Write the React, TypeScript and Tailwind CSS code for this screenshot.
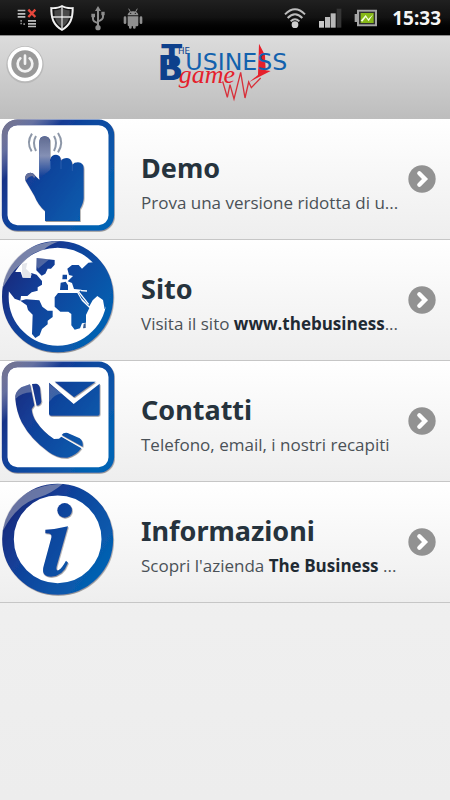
import type { ReactNode } from "react";

function StatusBar() {
  return (
    <div className="flex h-[35px] shrink-0 items-center justify-between bg-gradient-to-b from-[#202020] via-[#121212] to-black pr-[9px] pl-[16px]">
      <div className="flex items-center gap-[12px]">
        <svg className="h-[22px] w-[22px]" viewBox="0 0 66 66" aria-hidden="true">
          <g fill="#bdbdbd">
            <path d="M5 8h23v5H5zM5 18h23v5H5zM5 27h23v5H5zM36 39h24v5H36zM36 48h24v5H36zM36 56h24v5H36z" />
            <path d="M13 39h5v5h-5zM13 47h5v5h-5zM22 49h5v5h-5z" fill="#8a8a8a" />
          </g>
          <path d="M37 8l21 22M58 8L37 30" stroke="#e8473c" strokeWidth="7" />
        </svg>
        <svg className="h-[28px] w-[26px]" viewBox="3 0 78 84" aria-hidden="true">
          <path d="M39 3C29 9 16 11 4 9c-1 34 7 58 35 72C67 67 75 43 74 9 62 11 49 9 39 3z" fill="#f2f2f2" />
          <path d="M39 9C29 14 19 16 10 15c0 28 7 46 29 59 22-13 29-31 29-59-9 1-19-1-29-6z" fill="#151515" />
          <path d="M36 14c-7 3-14 5-20 5 0 6 0 12 1 17h19zM42 14c7 3 14 5 20 5 0 6 0 12-1 17H42zM36 42H18c3 11 9 19 18 25zM42 42h18c-3 11-9 19-18 25z" fill="#4a4a4a" />
          <path d="M39 8v66M8 39h62" stroke="#ededed" strokeWidth="4" />
        </svg>
        <svg className="ml-[2px] h-[26px] w-[16px]" viewBox="0 0 48 78" aria-hidden="true">
          <g fill="none" stroke="#8d8d8d" strokeWidth="6">
            <path d="M24 14v56M9 31v11q0 8 15 12M39 27v9q0 8-15 13" />
          </g>
          <g fill="#8d8d8d">
            <path d="M24 3l9 15H15zM4 26h11v11H4zM34 20h10v11H34z" />
            <circle cx="24" cy="68" r="8" />
          </g>
        </svg>
        <svg className="ml-[4px] h-[22px] w-[22px]" viewBox="0 0 66 66" aria-hidden="true">
          <g fill="#8f8f8f">
            <path d="M17 25C18 9 48 9 49 25zM17 28h32v26q0 4-4 4h-4v4q0 3-4 3t-4-3v-4h-4v4q0 3-4 3t-4-3v-4q-4 0-4-4z" />
            <rect x="5" y="28" width="8" height="23" rx="4" />
            <rect x="53" y="28" width="8" height="23" rx="4" />
          </g>
          <path d="M20 5l6 11M46 5l-6 11" stroke="#8f8f8f" strokeWidth="3" />
          <circle cx="26" cy="19" r="2" fill="#151515" />
          <circle cx="40" cy="19" r="2" fill="#151515" />
        </svg>
      </div>
      <div className="flex items-center gap-[12px]">
        <svg className="h-[22px] w-[22px]" viewBox="0 0 66 66" aria-hidden="true">
          <g fill="none" stroke="#bcbcbc" strokeWidth="6">
            <path d="M3 22q30-30 60 0M11 33q22-23 44 0M20 43q13-13 26 0" />
          </g>
          <circle cx="33" cy="53" r="10" fill="#cfcfcf" />
        </svg>
        <svg className="h-[20px] w-[24px]" viewBox="0 0 72 60" aria-hidden="true">
          <path d="M3 39h15v20H3z" fill="#c8c8c8" />
          <path d="M21 27h15v32H21z" fill="#bcbcbc" />
          <path d="M38 16h15v43H38z" fill="#b8b8b8" />
          <path d="M56 2h14v57H56z" fill="#363636" />
        </svg>
        <svg className="h-[18px] w-[24px]" viewBox="0 0 72 54" aria-hidden="true">
          <path d="M9 2h60v50H9V39H2V15h7z" fill="#a5a5a5" />
          <path d="M15 8h48v38H15z" fill="#303030" />
          <path d="M20 12h39v30H20z" fill="#86b817" />
          <path d="M20 35l15-17 8 12 15-15-14 22-9-12-10 13z" fill="#f4ffe1" />
        </svg>
        <time className="ml-[2px] text-[19px] leading-[24px] font-bold text-[#f5f5f5]">15:33</time>
      </div>
    </div>
  );
}

function Logo() {
  return (
    <svg className="h-[60px] w-[131px] overflow-visible" viewBox="30 15 393 180" role="img" aria-label="The Business Game">
      <path d="M327 17L345 52 347 97 362 99 298 132 324 111z" fill="#e5202b" />
      <g fill="#0d408c" fontFamily="'DejaVu Sans', sans-serif">
        <text x="34" y="84" fontSize="92" fontWeight="700">T</text>
        <text x="22" y="127" fontSize="103" fontWeight="700">B</text>
        <text x="84" y="47" fontSize="26">HE</text>
      </g>
      <text x="106" y="95" fontSize="71" fill="#1261ad" fontFamily="'DejaVu Sans', sans-serif">USINESS</text>
      <text x="86" y="136" fontSize="78" fill="#e5202b" fontStyle="italic" fontFamily="'Liberation Serif', serif">game</text>
      <path d="M218 130L232 178 240 140 252 183 272 103 285 180 296 132 304 149 332 120" fill="none" stroke="#d8303a" strokeWidth="4" />
    </svg>
  );
}

function Header() {
  return (
    <header className="grid h-[84px] shrink-0 grid-cols-[1fr_auto_1fr] items-start border-t border-[#8b8b8b] bg-gradient-to-b from-[#dcdcdc] to-[#bdbdbd] px-[5px] pt-[7px]">
      <button type="button" aria-label="Esci" className="h-[42px] w-[42px] cursor-pointer">
        <svg className="h-[42px] w-[42px]" viewBox="0 0 126 126" aria-hidden="true">
          <circle cx="60" cy="65" r="56" fill="#b9b9b9" />
          <circle cx="60" cy="63" r="52" fill="#fff" />
          <circle cx="60" cy="63" r="41" fill="#999" />
          <path d="M46 46a22 22 0 1 0 28 0M60 38v24" fill="none" stroke="#f3f3f3" strokeWidth="8" strokeLinecap="round" />
        </svg>
      </button>
      <Logo />
    </header>
  );
}

function IconDefs() {
  return (
    <svg className="absolute h-0 w-0" aria-hidden="true">
      <defs>
        <linearGradient id="blue" gradientUnits="userSpaceOnUse" x1="6" y1="30" x2="342" y2="260">
          <stop offset="0" stopColor="#1c2070" />
          <stop offset="0.4" stopColor="#123f98" />
          <stop offset="1" stopColor="#0364b4" />
        </linearGradient>
        <linearGradient id="gloss" gradientUnits="userSpaceOnUse" x1="14" y1="20" x2="100" y2="106">
          <stop offset="0" stopColor="#8f8f96" stopOpacity="0.75" />
          <stop offset="0.5" stopColor="#b4b4c0" stopOpacity="0.5" />
          <stop offset="1" stopColor="#d5d5dc" stopOpacity="0" />
        </linearGradient>
        <linearGradient id="finger" gradientUnits="userSpaceOnUse" x1="0" y1="60" x2="0" y2="185">
          <stop offset="0" stopColor="#5d688e" />
          <stop offset="0.5" stopColor="#8490b5" />
          <stop offset="1" stopColor="#123f98" />
        </linearGradient>
        <filter id="soft" x="-10%" y="-10%" width="120%" height="120%">
          <feDropShadow dx="2" dy="3" stdDeviation="2" floodColor="#555" floodOpacity="0.6" />
        </filter>
      </defs>
    </svg>
  );
}

function IconFrame({ children }: { children: ReactNode }) {
  return (
    <svg className="h-[115px] w-[115px] shrink-0" viewBox="0 12 345 345" aria-hidden="true">
      {children}
    </svg>
  );
}

function SquareBorder() {
  return (
    <>
      <rect x="14" y="22" width="320" height="317" rx="38" fill="#fff" stroke="url(#blue)" strokeWidth="17" filter="url(#soft)" />
      <rect x="14" y="22" width="320" height="317" rx="38" fill="none" stroke="url(#gloss)" strokeWidth="17" />
    </>
  );
}

function DemoIcon() {
  return (
    <IconFrame>
      <SquareBorder />
      <g filter="url(#soft)">
        <path
          d="M118 82Q118 64 134 64T150 82V134Q154 119 168 119 182 119 183 137 188 129 201 129 215 130 217 149 222 142 234 142 251 143 251 160V248Q251 263 240 282V318H135V288Q114 270 103 242L77 198Q72 182 84 175 97 169 106 183L118 194z"
          fill="url(#blue)"
        />
        <path d="M118 82Q118 64 134 64T150 82V165L118 190z" fill="url(#finger)" />
        <path d="M103 190L97 183Q84 185 77 198 72 182 84 175 97 169 106 183z" fill="#66709a" />
      </g>
      <path d="M151 138v24M183 138v24M217 149v19" stroke="#3b69b5" strokeWidth="2" />
      <g fill="none" stroke="#8d97a8" strokeWidth="6">
        <path d="M108 63q-12 20 0 45M96 56q-18 27-1 53M162 63q12 20 0 45M174 54q19 29 0 58" />
      </g>
    </IconFrame>
  );
}

function GlobeIcon() {
  return (
    <IconFrame>
      <circle cx="173" cy="182" r="157" fill="#fff" stroke="url(#blue)" strokeWidth="20" filter="url(#soft)" />
      <g fill="url(#blue)">
        <path d="M24 130L42 108H62L68 125 92 126 94 111 110 116 126 135V146L113 154V164L95 169 82 180H63L61 194 44 188 24 163z" />
        <path d="M110 66L164 72V86L153 98H143L136 113 125 119 109 103z" />
        <path d="M61 194L78 190 118 193 127 212 143 224H158V243L143 254V265L126 279 119 298 106 306 96 294 98 236 84 222 80 208z" />
        <path d="M202 98L216 87H236L246 98 265 80 294 77 333 132 329 188 314 220 309 192 292 180 278 193 268 211 244 186 235 169 245 161 222 159 216 141 203 136 219 120 207 117z" />
        <path d="M188 116h13v14h-14zM182 140L197 137 204 148V162H180z" />
        <path d="M174 171H232L246 195 268 216 258 237V260L246 262 240 277 224 281 214 268V234L205 227H181L164 212V184z" />
      </g>
      <path d="M235 166L266 205M243 164l18 1" stroke="#fff" strokeWidth="4" />
      <path d="M251 264l6-3v15l-8 1z" fill="#385d91" />
      <path d="M8 155C17 70 90 16 180 16Q150 24 130 42 95 48 72 78 40 100 24 130z" fill="#b9bac4" opacity="0.6" />
      <path d="M110 66l38 4-34 28q-7-10-4-32z" fill="#b9bac4" opacity="0.35" />
      <path d="M66 84l16-4-4 18 18 18-8 10-20-2-2-16z" fill="#d9dbe3" opacity="0.7" />
    </IconFrame>
  );
}

function ContactIcon() {
  return (
    <IconFrame>
      <SquareBorder />
      <g fill="url(#blue)" filter="url(#soft)">
        <path d="M46 126Q43 106 64 91L90 82 103 145 95 156Q96 176 109 194 130 225 162 246L177 245 184 239 244 274Q228 296 202 302 171 304 145 284 93 248 65 196 49 163 46 126z" />
        <path d="M96 81L109 80Q118 82 120 93L124 133Q123 145 110 146z" />
        <path d="M185 234Q190 226 203 228L239 244Q250 251 248 269z" />
        <path d="M147 77L221 141 299 80V170Q299 176 293 176H153Q147 176 147 170z" />
        <path d="M164 74H287L222 121z" />
      </g>
      <path d="M46 126Q43 106 64 91L90 82 94 106Q66 106 46 126z" fill="#ccc" opacity="0.35" />
      <path d="M147 80L185 110Q165 110 147 135z" fill="#ccc" opacity="0.25" />
    </IconFrame>
  );
}

function InfoIcon() {
  return (
    <IconFrame>
      <circle cx="173" cy="184" r="149" fill="#fff" stroke="url(#blue)" strokeWidth="35" filter="url(#soft)" />
      <path d="M8 160C17 72 90 18 188 18Q155 46 118 58 50 78 8 160z" fill="#b9bac4" opacity="0.5" />
      <g fill="url(#blue)" filter="url(#soft)">
        <circle cx="194" cy="97" r="22" />
        <path d="M136 155Q168 154 204 145L170 265Q167 279 175 277 185 272 198 248L204 254Q190 293 154 296 124 297 130 268L154 179Q158 165 136 166z" />
      </g>
    </IconFrame>
  );
}

function Arrow() {
  return (
    <svg className="h-[28px] w-[28px] shrink-0" viewBox="0 0 84 84" aria-hidden="true">
      <circle cx="42" cy="42" r="41" fill="#929292" />
      <path d="M34 25L51 42 34 59" fill="none" stroke="#fff" strokeWidth="13" strokeLinecap="round" />
    </svg>
  );
}

const items: { title: string; href: string; icon: ReactNode; text: ReactNode }[] = [
  { title: "Demo", href: "#demo", icon: <DemoIcon />, text: "Prova una versione ridotta di u..." },
  { title: "Sito", href: "#sito", icon: <GlobeIcon />, text: <>Visita il sito <strong className="text-[#1f2a33]">www.thebusiness</strong>...</> },
  { title: "Contatti", href: "#contatti", icon: <ContactIcon />, text: "Telefono, email, i nostri recapiti" },
  { title: "Informazioni", href: "#informazioni", icon: <InfoIcon />, text: <>Scopri l'azienda <strong className="text-[#1f2a33]">The Business</strong> ...</> },
];

export default function App() {
  return (
    <div className="flex min-h-screen flex-col bg-gradient-to-b from-[#f6f6f6] to-[#ededed] font-['Noto_Sans',sans-serif]">
      <IconDefs />
      <StatusBar />
      <Header />
      <ul>
        {items.map((item) => (
          <li key={item.title}>
            <a
              href={item.href}
              className="flex h-[121px] border-b border-[#c6c6c6] bg-gradient-to-b from-white to-[#eeeeee] pr-[14px]"
            >
              {item.icon}
              <div className="min-w-0 flex-1 pt-[31px] pl-[26px]">
                <h2 className="text-[27px] leading-[36px] font-bold text-[#26333d]">{item.title}</h2>
                <p className="font-['Open_Sans',sans-serif] text-[17px] leading-[34px] whitespace-nowrap text-[#4a5157]">{item.text}</p>
              </div>
              <div className="flex items-center">
                <Arrow />
              </div>
            </a>
          </li>
        ))}
      </ul>
    </div>
  );
}
